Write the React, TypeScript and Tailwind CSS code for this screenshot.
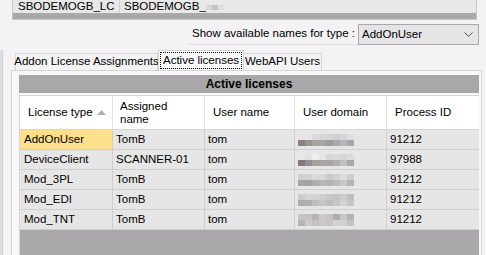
import React from "react";

const rows = [
  { t: "AddOnUser", a: "TomB", u: "tom", p: "91212", sel: true },
  { t: "DeviceClient", a: "SCANNER-01", u: "tom", p: "97988" },
  { t: "Mod_3PL", a: "TomB", u: "tom", p: "91212" },
  { t: "Mod_EDI", a: "TomB", u: "tom", p: "91212" },
  { t: "Mod_TNT", a: "TomB", u: "tom", p: "91212" },
];

const blurSets = [
  [["#e4e2e4", "#e6e6e6", "#dcdadc", "#d8d8d8", "#d4d4d6", "#d0d0d0", "#d6d6d8", "#dedede"], ["#8a8088", "#9a9690", "#a4a49a", "#a8a6a4", "#9e9a9e", "#aca8ac", "#b8b6bc", "#a8a8a6"]],
  [["#e8e8e8", "#e2e2e2", "#eeeeee", "#e4e4e6", "#d8d6d8", "#dadada", "#d6d6d8", "#dcdcdc"], ["#847880", "#948e94", "#a2a29a", "#a8a4a8", "#a6a2a6", "#b0aeb0", "#c0c0c4", "#a8a8a8"]],
  [["#d0cece", "#d4d2d4", "#dadad8", "#d8d6d8", "#cccacc", "#d2d2d2", "#dcdcde", "#cecece"], ["#aaa4aa", "#a6a2a0", "#b0aeaa", "#bab6b6", "#b4b2b4", "#bcbabc", "#c8c8ca", "#b6b6b6"]],
  [["#cdcacd", "#d6d4d6", "#d4d2d0", "#cecece", "#c8c6ca", "#c4c4c8", "#ccccce", "#bebebe"], ["#b0aab0", "#b4b0b2", "#c0beb8", "#c6c4c4", "#bebcbe", "#c8c6ca", "#d2d2d4", "#c4c4c4"]],
  [["#c8c4c8", "#c4c0c4", "#b6b4b6", "#cccac8", "#c4c2c4", "#b0acb0", "#c8c8cc", "#b4b4b4"], ["#b6b2b6", "#cccacc", "#c4c2c2", "#cacaca", "#c6c4c6", "#d4d2d4", "#d0d0d2", "#c4c4c4"]],
];

function Blur({ set }: { set: string[][] }) {
  return (
    <div className="flex flex-col">
      {set.map((line, i) => (
        <div key={i} className="flex">
          {line.map((c, j) => (
            <div key={j} className="w-[7px] h-[6px]" style={{ backgroundColor: c }} />
          ))}
        </div>
      ))}
    </div>
  );
}

export default function App() {
  return (
    <div
      className="w-[486px] h-[255px] bg-[#f4f2f4] overflow-hidden text-[11px] text-black flex whitespace-nowrap"
      style={{ fontFamily: '"Liberation Sans", Arial, sans-serif' }}
    >
      {/* left splitter edge */}
      <div className="w-[12px] shrink-0 flex flex-col">
        <div className="h-[50px]" />
        <div className="flex-1 w-[3px] bg-[#e0dee0] border-r border-[#d2d0d2]" />
      </div>

      <div className="w-[470px] shrink-0 flex flex-col">
        {/* top grid */}
        <div className="w-[465px] border-l border-r border-b border-[#c8c8c8]">
          <div className="flex h-[13px] bg-[#e8e8e8] leading-[12px] text-[11.5px]">
            <div className="w-[107px] pl-[5px] border-r border-[#cfcfcf]">SBODEMOGB_LC</div>
            <div className="flex-1 pl-[4px] flex items-start">
              <span>SBODEMOGB_</span>
              <div className="flex mt-[5px]">
                <div className="w-[6px] h-[5px] bg-[#d8d6d8]" />
                <div className="w-[6px] h-[5px] bg-[#c4c2c6]" />
                <div className="w-[6px] h-[5px] bg-[#e0dee0]" />
              </div>
            </div>
          </div>
          <div className="h-[6px] bg-[#a9a9a9]" />
        </div>

        {/* filter row */}
        <div className="flex justify-end items-center mt-[4px] h-[21px] pr-[3px]">
          <div className="h-[20px] flex items-center pr-[3px] border-b border-[#e2e0e2] pl-[4px] text-[11.5px]">
            Show available names for type :
          </div>
          <div className="w-[121px] h-[21px] bg-[#e6e4e6] border border-[#a8a8a8] flex items-center justify-between pl-[3px] pr-[5px] text-[11.5px]">
            <span>AddOnUser</span>
            <svg width="9" height="6" viewBox="0 0 9 6">
              <path d="M0.5 0.5 L4.5 4.5 L8.5 0.5" stroke="#555" strokeWidth="1" fill="none" />
            </svg>
          </div>
        </div>

        {/* tabs */}
        <div className="flex items-end h-[25px] pl-[3px]">
          <div className="h-[17px] w-[143px] border border-b-0 border-[#d6d6d6] bg-[#f4f2f4] flex items-center justify-center text-[11.5px]">
            Addon License Assignments
          </div>
          <div className="h-[20px] w-[86px] border border-b-0 border-[#d6d6d6] bg-[#fafafa] flex items-center justify-center text-[11.5px]">
            <div className="border border-dotted border-black w-[82px] h-[17px] flex items-center justify-center">
              Active licenses
            </div>
          </div>
          <div className="h-[17px] w-[78px] border border-b-0 border-l-0 border-[#d6d6d6] bg-[#f4f2f4] flex items-center justify-center text-[11.5px]">
            WebAPI Users
          </div>
        </div>

        {/* panel */}
        <div className="flex-1 w-[471px] -ml-[1px] border border-b-0 border-[#d6d6d6] bg-[#f9f8f9] pl-[7px] pr-[2px] pt-[4px] flex flex-col">
          <div className="h-[18px] bg-[#a9a7a9] flex items-center justify-center font-bold text-[12px]">
            Active licenses
          </div>
          <div className="h-[2px]" />
          <div className="flex-1 bg-[#aaa8aa] border-l border-t border-[#d4d4d4] flex flex-col text-[11.5px]">
            {/* header */}
            <div className="flex h-[34px] bg-white border-b border-[#d6d6d6]">
              <div className="w-[93px] border-r border-[#e2e2e2] flex items-center pl-[8px] pr-[6px] justify-between">
                <span>License type</span>
                <svg width="9" height="5" viewBox="0 0 9 5">
                  <path d="M0 5 L4.5 0 L9 5 Z" fill="#b0b0b0" />
                </svg>
              </div>
              <div className="w-[92px] border-r border-[#e2e2e2] flex items-center pl-[7px] leading-[13px]">
                Assigned
                <br />
                name
              </div>
              <div className="w-[90px] border-r border-[#e2e2e2] flex items-center pl-[8px]">User name</div>
              <div className="w-[92px] border-r border-[#e2e2e2] flex items-center pl-[8px]">User domain</div>
              <div className="flex-1 flex items-center pl-[8px]">Process ID</div>
            </div>
            {rows.map((r, i) => (
              <div key={i} className="flex h-[20px] bg-[#e6e6e6] border-b border-[#cfcfcf]">
                <div
                  className={`w-[93px] border-r border-[#cfcfcf] flex items-center pl-[4px] ${r.sel ? "bg-[#fedf8c]" : ""}`}
                >
                  {r.t}
                </div>
                <div className="w-[92px] border-r border-[#cfcfcf] flex items-center pl-[3px]">{r.a}</div>
                <div className="w-[90px] border-r border-[#cfcfcf] flex items-center pl-[3px]">{r.u}</div>
                <div className="w-[92px] border-r border-[#cfcfcf] flex items-center pl-[3px]">
                  <Blur set={blurSets[i]} />
                </div>
                <div className="flex-1 flex items-center pl-[3px]">{r.p}</div>
              </div>
            ))}
          </div>
        </div>
      </div>
    </div>
  );
}
